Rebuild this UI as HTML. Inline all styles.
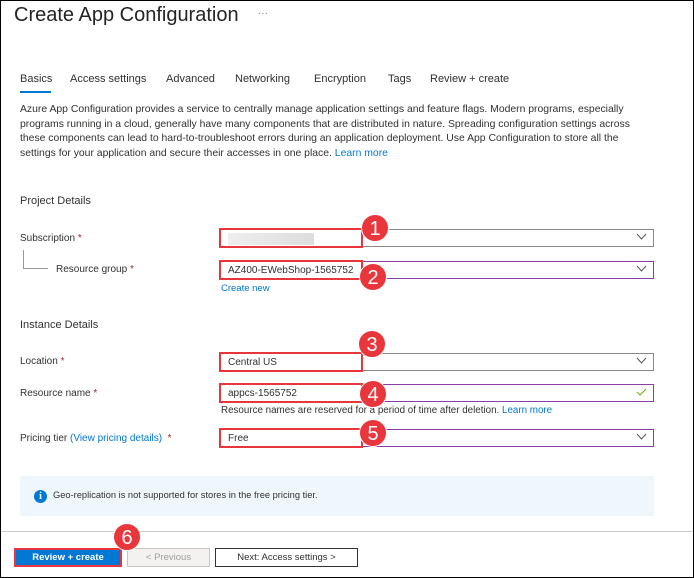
<!DOCTYPE html>
<html><head><style>
*{margin:0;padding:0;box-sizing:border-box}
body{width:694px;height:578px;position:relative;background:#fff;font-family:"Liberation Sans",sans-serif;color:#323130;overflow:hidden}
.frame{position:absolute;left:0;top:0;width:694px;height:578px;border:1px solid #000}
.a{position:absolute;white-space:nowrap}
.t{font-size:10px}
.inp{position:absolute;left:220px;width:434px;height:18px;border:1px solid #8a8886;background:#fff}
.inp.p{border-color:#8a3ea5}
.chev{position:absolute;right:6px;top:3px}
.red{position:absolute;left:219px;width:144px;height:20px;border:2px solid #e8363c;font-size:10px;padding:3px 0 0 7px;color:#323130}
.c{position:absolute;width:28px;height:28px;border-radius:50%;background:#e8363c;color:#fff;font-size:20px;text-align:center;line-height:28px;border:1px solid #fff}
.req{color:#a4262c}
.lnk{color:#0078d4}
</style></head><body>
<div class="a" style="left:14px;top:4px;font-size:20px;color:#252423">Create App Configuration</div>
<div class="a" style="left:258px;top:8px;font-size:10px;color:#777">···</div>
<div class="a t" style="left:20px;top:73px;font-size:11px">Basics</div>
<div style="position:absolute;left:20px;top:91px;width:31px;height:2px;background:#0078d4"></div>
<div class="a t" style="left:70px;top:73px;font-size:11px">Access settings</div>
<div class="a t" style="left:166px;top:73px;font-size:11px">Advanced</div>
<div class="a t" style="left:235px;top:73px;font-size:11px">Networking</div>
<div class="a t" style="left:314px;top:73px;font-size:11px">Encryption</div>
<div class="a t" style="left:388px;top:73px;font-size:11px">Tags</div>
<div class="a t" style="left:430px;top:73px;font-size:11px">Review + create</div>
<div class="a" style="left:20px;top:103px;font-size:10.4px;line-height:14.5px">Azure App Configuration provides a service to centrally manage application settings and feature flags. Modern programs, especially<br>programs running in a cloud, generally have many components that are distributed in nature. Spreading configuration settings across<br>these components can lead to hard-to-troubleshoot errors during an application deployment. Use App Configuration to store all the<br>settings for your application and secure their accesses in one place. <span class="lnk">Learn more</span></div>
<div class="a" style="left:20px;top:195px;font-size:11px">Project Details</div>
<div class="a t" style="left:20px;top:233px">Subscription <span class="req">*</span></div>
<div style="position:absolute;left:23px;top:250px;width:1px;height:18px;background:#999"></div>
<div style="position:absolute;left:23px;top:268px;width:25px;height:1px;background:#999"></div>
<div class="a t" style="left:56px;top:264px">Resource group <span class="req">*</span></div>
<div class="a t lnk" style="left:221px;top:283px;font-size:9.5px">Create new</div>
<div class="a" style="left:20px;top:319px;font-size:11px">Instance Details</div>
<div class="a t" style="left:20px;top:356px">Location <span class="req">*</span></div>
<div class="a t" style="left:20px;top:388px">Resource name <span class="req">*</span></div>
<div class="a t" style="left:221px;top:405px;font-size:9.8px">Resource names are reserved for a period of time after deletion. <span class="lnk">Learn more</span></div>
<div class="a t" style="left:20px;top:433px">Pricing tier <span class="lnk">(View pricing details)</span> &nbsp;<span class="req">*</span></div>

<div class="inp" style="top:229px"><svg class="chev" width="11" height="8"><path d="M1 1l4.5 5L10 1" stroke="#555" fill="none"/></svg></div>
<div class="inp p" style="top:261px"><svg class="chev" width="11" height="8"><path d="M1 1l4.5 5L10 1" stroke="#555" fill="none"/></svg></div>
<div class="inp" style="top:353px"><svg class="chev" width="11" height="8"><path d="M1 1l4.5 5L10 1" stroke="#555" fill="none"/></svg></div>
<div class="inp p" style="top:384px"><svg class="chev" width="11" height="8"><path d="M1 4l3 3 6-6" stroke="#6bb700" fill="none"/></svg></div>
<div class="inp p" style="top:429px"><svg class="chev" width="11" height="8"><path d="M1 1l4.5 5L10 1" stroke="#555" fill="none"/></svg></div>

<div class="red" style="top:228px"><div style="margin-top:0;width:86px;height:12px;background:linear-gradient(90deg,#eee,#ddd)"></div></div>
<div class="red" style="top:260px">AZ400-EWebShop-1565752</div>
<div class="red" style="top:352px">Central US</div>
<div class="red" style="top:383px">appcs-1565752</div>
<div class="red" style="top:428px">Free</div>

<div class="c" style="left:361px;top:214px">1</div>
<div class="c" style="left:359px;top:263px">2</div>
<div class="c" style="left:358px;top:330px">3</div>
<div class="c" style="left:359px;top:380px">4</div>
<div class="c" style="left:359px;top:419px">5</div>

<div style="position:absolute;left:20px;top:476px;width:634px;height:40px;background:#eff6fc"></div>
<div style="position:absolute;left:34px;top:490px;width:13px;height:13px;border-radius:50%;background:#0078d4;color:#fff;font-size:10px;font-weight:bold;text-align:center;line-height:13px;font-family:'Liberation Serif',serif">i</div>
<div class="a" style="left:53px;top:490px;font-size:9.3px">Geo-replication is not supported for stores in the free pricing tier.</div>
<div style="position:absolute;left:0;top:531px;width:694px;height:1px;background:#ccc"></div>
<div style="position:absolute;left:14px;top:548px;width:108px;height:19px;background:#0078d4;border:2px solid #e8363c;color:#fff;font-size:9.5px;font-weight:bold;text-align:center;line-height:15px">Review + create</div>
<div style="position:absolute;left:127px;top:548px;width:83px;height:19px;background:#f3f2f1;border:1px solid #c8c6c4;color:#a19f9d;font-size:9.5px;text-align:center;line-height:17px">&lt; Previous</div>
<div style="position:absolute;left:215px;top:548px;width:143px;height:19px;background:#fff;border:1px solid #323130;font-size:9.5px;text-align:center;line-height:17px">Next: Access settings &gt;</div>
<div class="c" style="left:113px;top:523px">6</div>
<div class="frame"></div>
</body></html>
